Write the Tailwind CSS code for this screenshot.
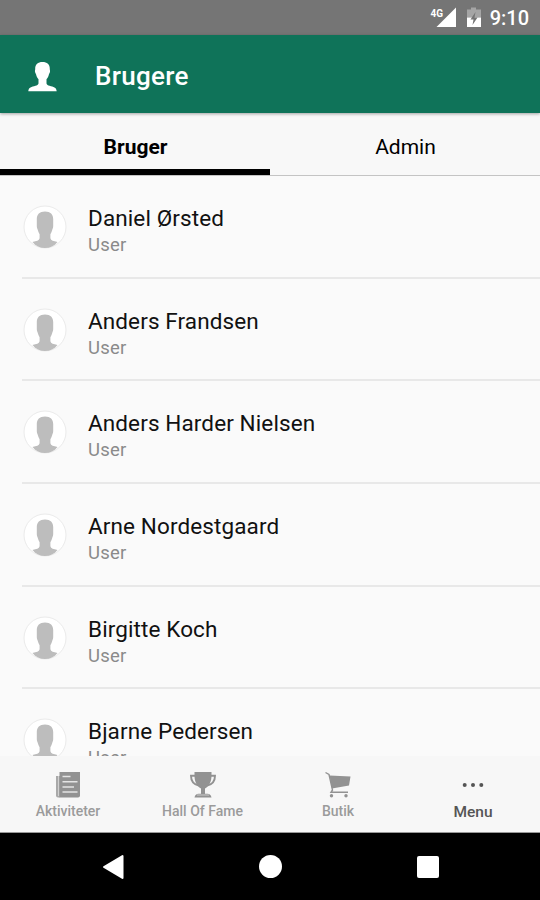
<!DOCTYPE html>
<html lang="da">
<head>
    <meta charset="UTF-8">
    <meta name="viewport" content="width=device-width, initial-scale=1.0">
    <title>Brugere</title>
    <script src="https://cdn.jsdelivr.net/npm/@tailwindcss/browser@4"></script>
</head>
<body class="flex flex-col h-[900px] w-[540px] overflow-hidden bg-[#fafafa] font-['Roboto',sans-serif]">

    <!-- Status bar -->
    <div class="flex h-[35px] shrink-0 items-center justify-end bg-[#757575] pr-[11px] text-white">
        <svg class="h-[22px] w-[28px]" viewBox="0 0 28 22">
            <path d="M27 .5V20H7.500z" fill="#fff"/>
            <text x="1.500" y="9.500" font-size="11" font-weight="700" fill="#fff" stroke="#757575" stroke-width="2" paint-order="stroke" textLength="12.500" lengthAdjust="spacingAndGlyphs">4G</text>
        </svg>
        <svg class="ml-[9px] h-[22px] w-[16px]" viewBox="0 0 16 22">
            <path d="M5 .5h5v2h5v8H1v-8h4z" fill="#a5a5a5"/>
            <path d="M1 10.500h14v9.500H1z" fill="#fff"/>
            <path d="M9.500 5l-5 7.500h3L6.500 18l5-7.500h-3z" fill="#757575"/>
        </svg>
        <span class="ml-[8px] mt-[1px] text-[20px] leading-none font-medium">9:10</span>
    </div>

    <!-- App bar -->
    <header class="relative flex h-[78px] shrink-0 items-center bg-[#0f7359] pl-[28px] shadow-[0_1px_3px_rgba(0,0,0,0.35)]">
        <svg class="mt-[5px] h-[30px] w-[29px]" viewBox="0 0 29 30" fill="#fff">
            <path d="M14.500 0C10 0 7 2.500 7.200 7c0 1-.4 1.500-.2 2.800.2 1.200.8 1.600 1.100 2.700.5 2 1.300 3.500 2.400 4.700v4.300c-.3 1.300-1.500 1.800-3 2.300C3.500 25 .7 25.200.3 29.300h28.400c-.4-4.100-3.200-4.300-7.200-5.500-1.500-.5-2.700-1-3-2.300v-4.300c1.100-1.200 1.900-2.700 2.400-4.700.3-1.100.9-1.500 1.100-2.700.2-1.300-.2-1.800-.2-2.800C22 2.500 19 0 14.500 0z"/>
        </svg>
        <h1 class="ml-[38px] mt-[3px] text-[26px] leading-none tracking-[0.300px] font-medium text-white">Brugere</h1>
    </header>

    <!-- Tabs -->
    <div class="grid h-[63px] shrink-0 grid-cols-2 border-b border-[#c4c4c4] bg-[#f8f8f8] text-center text-[21px] text-black">
        <div class="border-b-[6px] border-black pt-[18px] pl-[1px] leading-8 font-bold">Bruger</div>
        <div class="pt-[18px] pl-[1px] leading-8">Admin</div>
    </div>

    <!-- User list -->
    <ul id="userList" class="min-h-0 flex-1 overflow-hidden"></ul>

    <!-- Bottom menu -->
    <nav class="grid h-[77px] shrink-0 grid-cols-4 border-b border-[#999] bg-[#f7f7f7] text-[14px] leading-4 font-medium text-[#9b9b9b]">
        <div class="flex flex-col items-center pt-[15px]">
            <svg class="h-[28px] w-[26px]" viewBox="0 0 26 28">
                <path d="M1 5h4v21.500H3a2 2 0 0 1-2-2z" fill="#a9a9a9"/>
                <path d="M4.500 1H25v23.500a2 2 0 0 1-2 2H4.500z" fill="#929292"/>
                <path d="M3.500 5v20" stroke="#d0d0d0"/>
                <path d="M7.500 5.500h8M7.500 10.700h15M7.500 16h11.500M7.500 21h15" stroke="#e4e4e4" stroke-width="1.500"/>
            </svg>
            <span class="mt-[4px] pl-[1px]">Aktiviteter</span>
        </div>
        <div class="flex flex-col items-center pt-[15px]">
            <svg class="h-[28px] w-[28px]" viewBox="0 0 28 28">
                <path d="M6 4.700H2c0 6 2.800 8.700 7.800 9.800M22 4.700h4c0 6-2.800 8.700-7.800 9.800" fill="none" stroke="#929292" stroke-width="1.900"/>
                <path d="M5.500 1h17v3.500c0 6-2 10.500-6.500 13v5.300h2.500c2 0 3.500 1.200 4 3.700h-17c.5-2.500 2-3.700 4-3.700H12v-5.300c-4.500-2.500-6.500-7-6.500-13z" fill="#929292"/>
                <path d="M8 24h12" stroke="#ccc"/>
            </svg>
            <span class="mt-[4px]">Hall Of Fame</span>
        </div>
        <div class="flex flex-col items-center pt-[15px]">
            <svg class="h-[28px] w-[26px]" viewBox="0 0 26 28">
                <path d="M.5 1.500l3.500 2 3.500 15.500-1.500 2.300h17" fill="none" stroke="#929292" stroke-width="1.400"/>
                <path d="M4.500 4.500L25.500 5.500 24 14.500 7 17.500z" fill="#929292"/>
                <circle cx="6.500" cy="24.700" r="1.700" fill="#929292"/>
                <circle cx="21" cy="24.700" r="1.700" fill="#929292"/>
            </svg>
            <span class="mt-[4px] pl-[1px]">Butik</span>
        </div>
        <div class="flex flex-col items-center pt-[15px] text-[#555]">
            <svg class="h-[28px] w-[22px]" viewBox="0 0 22 28" fill="#555">
                <circle cx="2.700" cy="14" r="2"/>
                <circle cx="11" cy="14" r="2"/>
                <circle cx="19.300" cy="14" r="2"/>
            </svg>
            <span class="mt-[5px] pl-[1px] text-[15.500px]">Menu</span>
        </div>
    </nav>

    <!-- System buttons -->
    <div class="flex h-[67px] shrink-0 items-center justify-between bg-black pr-[101px] pl-[102px]">
        <svg class="h-[26px] w-[22px]" viewBox="0 0 22 26">
            <path d="M2 13L20.500 2v22z" fill="#fff" stroke="#fff" stroke-width="2" stroke-linejoin="round"/>
        </svg>
        <div class="size-[23px] rounded-full bg-white"></div>
        <div class="size-[22px] rounded-[2px] bg-white"></div>
    </div>

    <script>
        const users = [
            "Daniel Ørsted",
            "Anders Frandsen",
            "Anders Harder Nielsen",
            "Arne Nordestgaard",
            "Birgitte Koch",
            "Bjarne Pedersen"
        ];

        users.forEach((name) => {
            const row = document.createElement("li");
            row.className = "ml-[22px] flex h-[102.700px] items-start border-b-2 border-[#e8e8e8]";
            row.innerHTML = `
                <svg class="mt-[29px] ml-[1px] h-[44px] w-[44px] shrink-0" viewBox="0 0 44 44">
                    <circle cx="22" cy="22" r="21" fill="#fff" stroke="#ebebeb"/>
                    <path d="M22 6.500c-5.500 0-8.200 3-8.200 7.500v7c0 2 .6 2.700 1 4 .4 1.700 1 3 1.800 4.200v4c-.5 2.300-3.100 2.800-7.100 3.800 3.200 4 7.500 6 12.500 6s9.300-2 12.500-6c-4-1-6.600-1.500-7.100-3.800v-4c.8-1.200 1.400-2.500 1.800-4.200.4-1.300 1-2 1-4v-7c0-4.500-2.700-7.500-8.200-7.500z" fill="#bdbdbd"/>
                </svg>
                <div class="mt-[28px] ml-[21px]">
                    <p class="text-[22.500px] leading-[28px] tracking-[0.110px] text-[#111]">${name}</p>
                    <p class="text-[18.500px] leading-[27px] tracking-[0.250px] text-[#8a8a8a]">User</p>
                </div>`;
            document.getElementById("userList").appendChild(row);
        });
    </script>
</body>
</html>
